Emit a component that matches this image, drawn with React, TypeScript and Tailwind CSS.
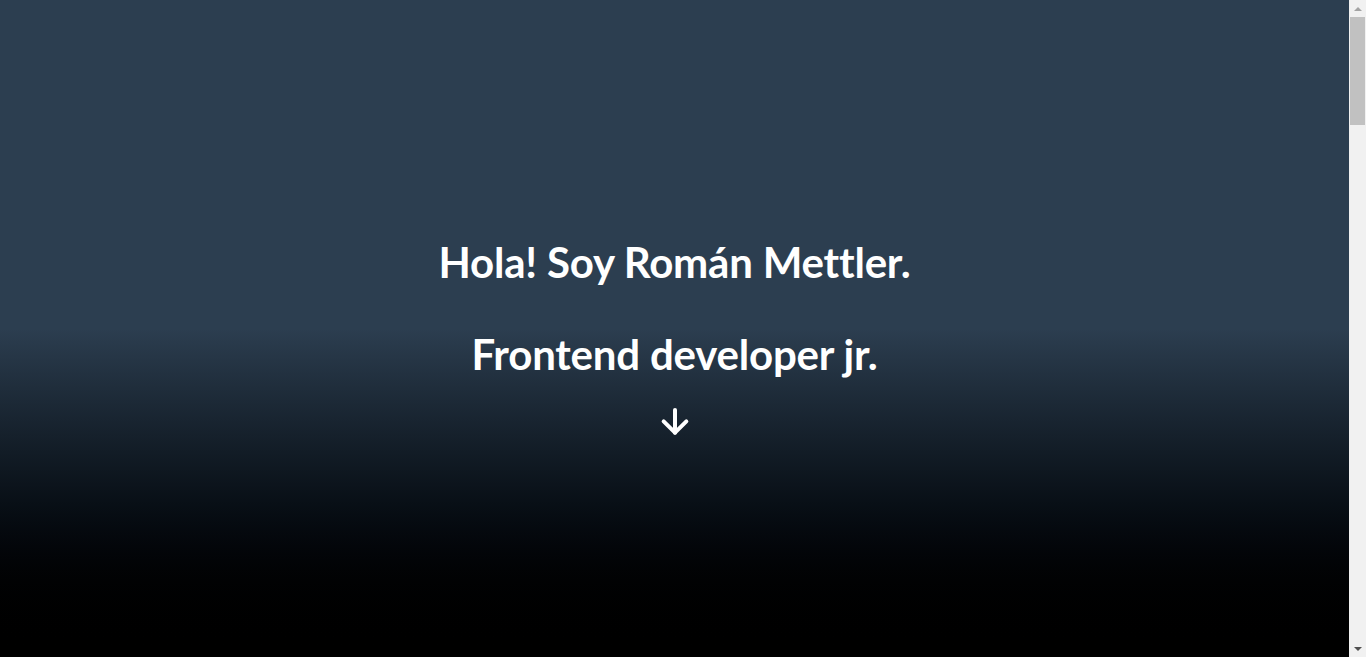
export default function App() {
  return (
    <div className="h-screen flex bg-black" style={{ fontFamily: 'Lato, "Open Sans", sans-serif' }}>
      <main className="flex-1 overflow-hidden">
        {/* Hero */}
        <section className="h-[657px] w-full bg-gradient-to-b from-[#2c3e50] via-[#2c3e50] via-50% to-black flex flex-col items-center justify-center text-white">
          <h1 className="text-[42px] font-bold leading-[52px] tracking-[-0.2px] mt-[16px]">Hola! Soy Román Mettler.</h1>
          <h2 className="text-[42px] font-bold leading-[52px] tracking-[-0.2px] mt-[40px]">Frontend developer jr.</h2>
          <a href="#about" className="mt-[26px] block">
            <svg width="32" height="32" viewBox="0 0 24 24" fill="none" stroke="white" strokeWidth="3" strokeLinecap="round" strokeLinejoin="round">
              <path d="M12 3v17" />
              <path d="M3.5 11.5l8.5 8.5 8.5-8.5" />
            </svg>
          </a>
        </section>

        {/* Rest of the page */}
        <section id="about" className="h-[3150px] bg-black" />
      </main>

      {/* Scrollbar */}
      <aside className="w-[17px] h-full bg-[#f1f1f1] flex flex-col items-center">
        <div className="h-[17px] w-full flex items-center justify-center">
          <div className="w-0 h-0 border-l-[4px] border-r-[4px] border-b-[4px] border-l-transparent border-r-transparent border-b-[#a3a3a3]" />
        </div>
        <div className="w-[15px] h-[108px] bg-[#c1c1c1]" />
        <div className="flex-1" />
        <div className="h-[17px] w-full flex items-center justify-center">
          <div className="w-0 h-0 border-l-[4px] border-r-[4px] border-t-[4px] border-l-transparent border-r-transparent border-t-[#505050]" />
        </div>
      </aside>
    </div>
  );
}
